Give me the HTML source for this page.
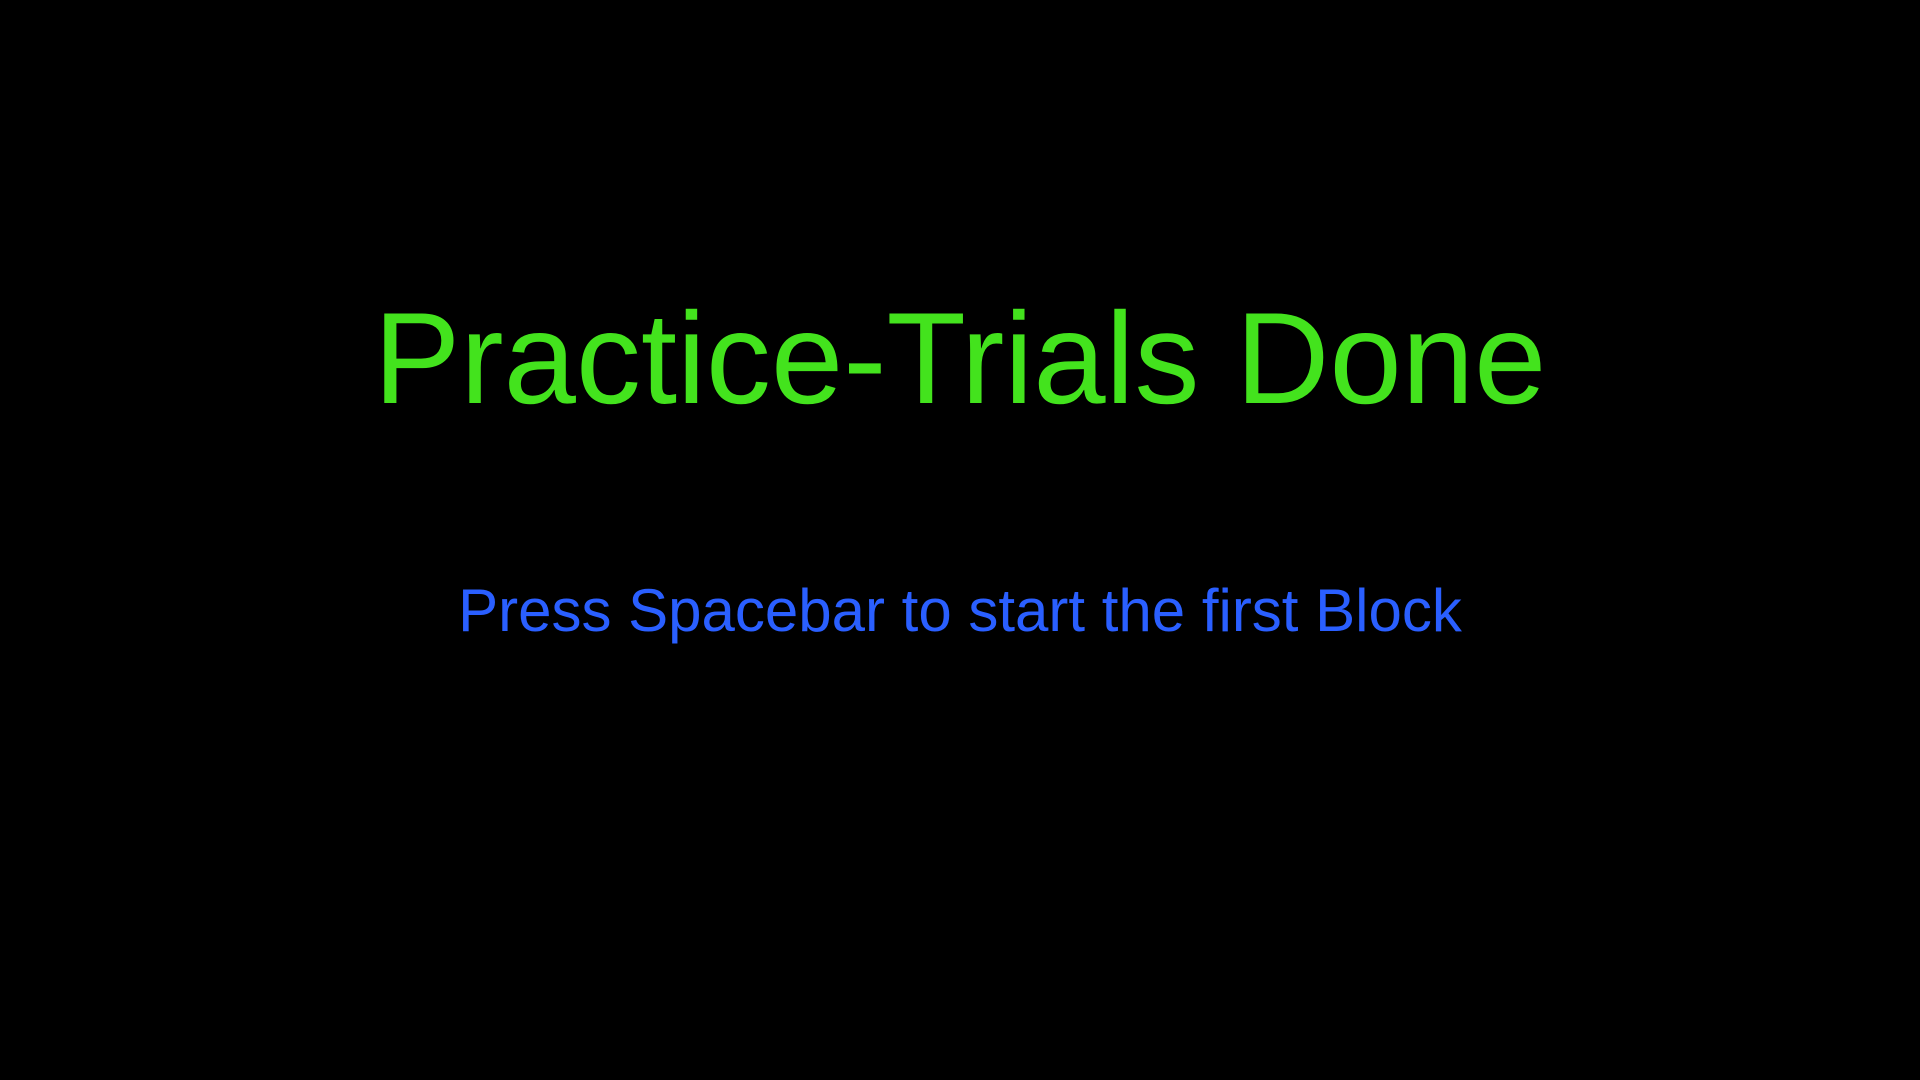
<!DOCTYPE html>
<html><head><style>
html,body{margin:0;padding:0;background:#000;width:1920px;height:1080px;overflow:hidden}
div{position:absolute;left:0;width:1920px;text-align:center;font-family:"Liberation Sans",Arial,sans-serif;line-height:1;white-space:nowrap}
#t{top:293px;font-size:130px;color:#43e31d}
#s{top:581px;font-size:60px;color:#2a5fff}
</style></head><body>
<div id="t">Practice-Trials Done</div>
<div id="s">Press Spacebar to start the first Block</div>
</body></html>
